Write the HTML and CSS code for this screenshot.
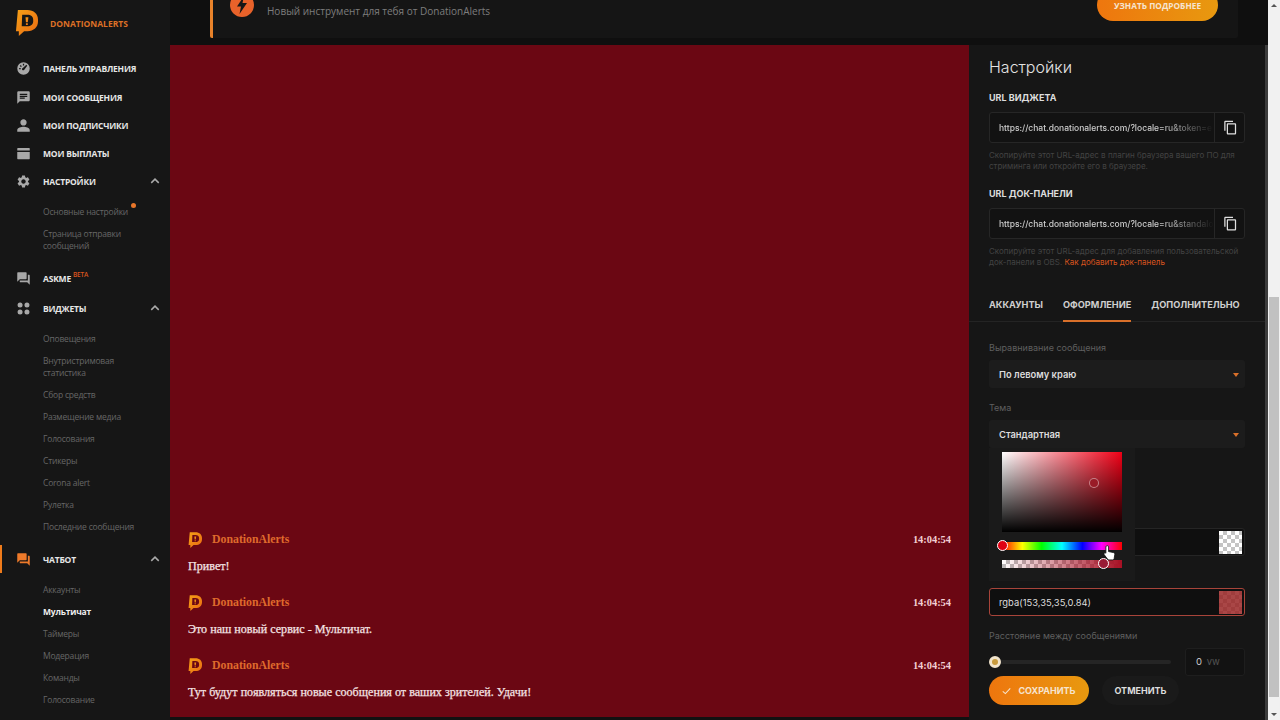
FILE: index.html
```html
<!DOCTYPE html>
<html lang="ru">
<head>
    <meta charset="UTF-8">
    <title>DonationAlerts - Мультичат</title>
    <link rel="stylesheet" href="styles.css">
</head>
<body>
    <svg class="sprite" width="0" height="0">
        <defs>
            <linearGradient id="logoFill" x1="0" y1="0" x2="1" y2="1">
                <stop offset="0" stop-color="#f5a017"/>
                <stop offset="1" stop-color="#ea6a12"/>
            </linearGradient>
            <symbol id="logo" viewBox="0 0 24 27">
                <path fill="url(#logoFill)" fill-rule="evenodd" d="M3 0H13C19.5 0 24 4 24 10V12C24 18 19.5 22 13 22H9.5L4 27V22H1ZM7.5 5L7 17H13C16.5 17 19 15 19 12V10C19 7 16.5 5 13 5Z"/>
                <path fill="url(#logoFill)" d="M11 7.5H14L13.4 12.8H11.4ZM11.4 13.8H13.4V15.6H11.4Z"/>
            </symbol>
            <symbol id="i-forum" viewBox="0 0 24 24"><path d="M21 6h-2v9H6v2c0 .55.45 1 1 1h11l4 4V7c0-.55-.45-1-1-1zm-4 6V3c0-.55-.45-1-1-1H3c-.55 0-1 .45-1 1v14l4-4h10c.55 0 1-.45 1-1z"/></symbol>
            <symbol id="i-copy" viewBox="0 0 24 24"><path d="M16 1H4c-1.1 0-2 .9-2 2v14h2V3h12V1zm3 4H8c-1.1 0-2 .9-2 2v14c0 1.1.9 2 2 2h11c1.1 0 2-.9 2-2V7c0-1.1-.9-2-2-2zm0 16H8V7h11v14z"/></symbol>
            <symbol id="i-chevron" viewBox="0 0 12 8"><path d="M1 6.5L6 1.5L11 6.5" fill="none" stroke="currentColor" stroke-width="2"/></symbol>
        </defs>
    </svg>

    <!-- Левое меню -->
    <aside class="sidebar">
        <div class="brand">
            <svg class="brand-logo"><use href="#logo"/></svg>
            <span class="brand-name">DONATIONALERTS</span>
        </div>
        <nav class="nav">
            <a class="nav-item nav-item-first">
                <svg class="nav-icon" viewBox="0 0 24 24"><path fill-rule="evenodd" d="M12 2a10 10 0 1 0 0 20a10 10 0 0 0 0-20zM5 11h2.5v2H5zM7.5 6.5l1.8 1.8-1.4 1.4-1.8-1.8zM11 4.5h2V7h-2zM16.5 6l1.5 1.5-4.5 6a2 2 0 1 1-2.5-2.5z"/></svg>
                <span>ПАНЕЛЬ УПРАВЛЕНИЯ</span>
            </a>
            <a class="nav-item">
                <svg class="nav-icon" viewBox="0 0 24 24"><path d="M20 2H4c-1.1 0-2 .9-2 2v18l4-4h14c1.1 0 2-.9 2-2V4c0-1.1-.9-2-2-2zM6 9h12v2H6V9zm8 5H6v-2h8v2zm4-6H6V6h12v2z"/></svg>
                <span>МОИ СООБЩЕНИЯ</span>
            </a>
            <a class="nav-item">
                <svg class="nav-icon" viewBox="0 0 24 24"><path d="M12 12c2.9 0 5-2.1 5-5s-2.1-5-5-5-5 2.1-5 5 2.1 5 5 5zm0 2c-3.3 0-10 1.7-10 5v3h20v-3c0-3.3-6.7-5-10-5z"/></svg>
                <span>МОИ ПОДПИСЧИКИ</span>
            </a>
            <a class="nav-item">
                <svg class="nav-icon" viewBox="0 0 24 24"><path d="M3 3H21C21.6 3 22 3.4 22 4V7H2V4C2 3.4 2.4 3 3 3ZM2 9.5H22V20C22 20.6 21.6 21 21 21H3C2.4 21 2 20.6 2 20Z"/></svg>
                <span>МОИ ВЫПЛАТЫ</span>
            </a>
            <a class="nav-item">
                <svg class="nav-icon" viewBox="0 0 24 24"><path d="M19.14 12.94c.04-.3.06-.61.06-.94 0-.32-.02-.64-.07-.94l2.03-1.58c.18-.14.23-.41.12-.61l-1.92-3.32c-.12-.22-.37-.29-.59-.22l-2.39.96c-.5-.38-1.03-.7-1.62-.94l-.36-2.54c-.04-.24-.24-.41-.48-.41h-3.84c-.24 0-.43.17-.47.41l-.36 2.54c-.59.24-1.13.57-1.62.94l-2.39-.96c-.22-.08-.47 0-.59.22L2.74 8.87c-.12.21-.08.47.12.61l2.03 1.58c-.05.3-.09.63-.09.94s.02.64.07.94l-2.03 1.58c-.18.14-.23.41-.12.61l1.92 3.32c.12.22.37.29.59.22l2.39-.96c.5.38 1.03.7 1.62.94l.36 2.54c.05.24.24.41.48.41h3.84c.24 0 .44-.17.47-.41l.36-2.54c.59-.24 1.13-.56 1.62-.94l2.39.96c.22.08.47 0 .59-.22l1.92-3.32c.12-.22.07-.47-.12-.61l-2.01-1.58zM12 15.6c-1.98 0-3.6-1.62-3.6-3.6s1.62-3.6 3.6-3.6 3.6 1.62 3.6 3.6-1.62 3.6-3.6 3.6z"/></svg>
                <span>НАСТРОЙКИ</span>
                <svg class="nav-chevron"><use href="#i-chevron"/></svg>
            </a>
            <ul class="sub-list">
                <li><span class="has-dot">Основные настройки</span></li>
                <li>Страница отправки сообщений</li>
            </ul>
            <a class="nav-item">
                <svg class="nav-icon"><use href="#i-forum"/></svg>
                <span>ASKME</span><sup class="beta">BETA</sup>
            </a>
            <a class="nav-item nav-item-gap">
                <svg class="nav-icon" viewBox="0 0 24 24"><circle cx="6.5" cy="6.5" r="4"/><circle cx="17.5" cy="6.5" r="4"/><circle cx="6.5" cy="17.5" r="4"/><circle cx="17.5" cy="17.5" r="4"/></svg>
                <span>ВИДЖЕТЫ</span>
                <svg class="nav-chevron"><use href="#i-chevron"/></svg>
            </a>
            <ul class="sub-list">
                <li>Оповещения</li>
                <li>Внутристримовая статистика</li>
                <li>Сбор средств</li>
                <li>Размещение медиа</li>
                <li>Голосования</li>
                <li>Стикеры</li>
                <li>Corona alert</li>
                <li>Рулетка</li>
                <li>Последние сообщения</li>
            </ul>
            <a class="nav-item nav-item-active">
                <svg class="nav-icon"><use href="#i-forum"/></svg>
                <span>ЧАТБОТ</span>
                <svg class="nav-chevron"><use href="#i-chevron"/></svg>
            </a>
            <ul class="sub-list">
                <li>Аккаунты</li>
                <li class="sub-active">Мультичат</li>
                <li>Таймеры</li>
                <li>Модерация</li>
                <li>Команды</li>
                <li>Голосование</li>
            </ul>
        </nav>
    </aside>

    <div class="main">
        <!-- Баннер -->
        <div class="banner">
            <div class="banner-card">
                <svg class="banner-icon" viewBox="0 0 24 24">
                    <circle cx="12" cy="12" r="12" fill="#e8622a"/>
                    <path d="M14 3L7 13.5H11L9.5 21L17 10H12.5Z" fill="#161616"/>
                </svg>
                <span class="banner-text">Новый инструмент для тебя от DonationAlerts</span>
                <a class="banner-button">УЗНАТЬ ПОДРОБНЕЕ</a>
            </div>
        </div>

        <div class="content">
            <!-- Превью чата -->
            <section class="chat">
                <div class="message">
                    <div class="message-head">
                        <svg class="message-logo"><use href="#logo"/></svg>
                        <span class="message-name">DonationAlerts</span>
                        <span class="message-time">14:04:54</span>
                    </div>
                    <p class="message-text">Привет!</p>
                </div>
                <div class="message">
                    <div class="message-head">
                        <svg class="message-logo"><use href="#logo"/></svg>
                        <span class="message-name">DonationAlerts</span>
                        <span class="message-time">14:04:54</span>
                    </div>
                    <p class="message-text">Это наш новый сервис - Мультичат.</p>
                </div>
                <div class="message">
                    <div class="message-head">
                        <svg class="message-logo"><use href="#logo"/></svg>
                        <span class="message-name">DonationAlerts</span>
                        <span class="message-time">14:04:54</span>
                    </div>
                    <p class="message-text">Тут будут появляться новые сообщения от ваших зрителей. Удачи!</p>
                </div>
            </section>

            <!-- Настройки -->
            <section class="panel">
                <h2 class="panel-title">Настройки</h2>

                <div class="url-label">URL ВИДЖЕТА</div>
                <div class="url-box">
                    <span class="url-value">https://chat.donationalerts.com/?locale=ru&amp;token=e</span>
                    <span class="url-copy"><svg class="copy-icon"><use href="#i-copy"/></svg></span>
                </div>
                <p class="hint">Скопируйте этот URL-адрес в плагин браузера вашего ПО для стриминга или откройте его в браузере.</p>

                <div class="url-label url-label-next">URL ДОК-ПАНЕЛИ</div>
                <div class="url-box">
                    <span class="url-value">https://chat.donationalerts.com/?locale=ru&amp;standalo</span>
                    <span class="url-copy"><svg class="copy-icon"><use href="#i-copy"/></svg></span>
                </div>
                <p class="hint">Скопируйте этот URL-адрес для добавления пользовательской док-панели в OBS. <a class="hint-link">Как добавить док-панель</a></p>

                <div class="tabs">
                    <span class="tab">АККАУНТЫ</span>
                    <span class="tab tab-active">ОФОРМЛЕНИЕ</span>
                    <span class="tab">ДОПОЛНИТЕЛЬНО</span>
                </div>

                <label class="field-label field-label-first">Выравнивание сообщения</label>
                <div class="select">По левому краю<i class="select-arrow"></i></div>

                <label class="field-label">Тема</label>
                <div class="select">Стандартная<i class="select-arrow"></i></div>

                <label class="field-label field-label-far">Цвет текста</label>
                <div class="color-field">
                    <span class="color-value">rgba(255,255,255,0)</span>
                    <span class="swatch"></span>
                </div>

                <label class="field-label">Цвет фона</label>
                <div class="color-field color-field-focus">
                    <span class="color-value">rgba(153,35,35,0.84)</span>
                    <span class="swatch swatch-red"></span>
                </div>

                <label class="field-label">Расстояние между сообщениями</label>
                <div class="range-row">
                    <div class="range-track"><span class="range-thumb"></span></div>
                    <div class="range-box">0 <span class="range-unit">vw</span></div>
                </div>

                <div class="actions">
                    <a class="btn-save">
                        <svg class="btn-check" viewBox="0 0 12 10"><path d="M1 5.5L4.5 8.5L11 1.5" fill="none" stroke="currentColor" stroke-width="1.4"/></svg>
                        СОХРАНИТЬ
                    </a>
                    <a class="btn-cancel">ОТМЕНИТЬ</a>
                </div>

                <!-- Открытый выбор цвета -->
                <div class="picker">
                    <div class="picker-area"><span class="picker-handle"></span></div>
                    <div class="picker-hue"><span class="hue-thumb"></span></div>
                    <div class="picker-alpha"><span class="alpha-thumb"></span></div>
                    <svg class="cursor" viewBox="0 0 14 18">
                        <path d="M4.5 1.5C5.3 1.5 6 2.2 6 3V8L11 9C12.3 9.3 12.8 10 12.7 11.2L12 15.5C11.8 16.4 11.3 17 10.3 17H6.5C5.8 17 5.3 16.7 4.9 16.2L1.4 11.5C.8 10.7 1 9.9 1.7 9.5C2.3 9.2 2.8 9.4 3.1 9.8V3C3.1 2.2 3.7 1.5 4.5 1.5Z" fill="#fff" stroke="#111" stroke-width=".9"/>
                    </svg>
                </div>
            </section>
        </div>
    </div>

    <!-- Полоса прокрутки страницы -->
    <div class="page-scroll">
        <i class="scroll-up"></i>
        <span class="scroll-thumb"></span>
        <i class="scroll-down"></i>
    </div>
</body>
</html>
```

FILE: styles.css
```css
* {
    box-sizing: border-box;
}
html, body {
    height: 100%;
}
body {
    display: flex;
    margin: 0;
    overflow: hidden;
    background-color: #111;
    color: #fff;
    font-family: "Inter", "Liberation Sans", sans-serif;
}
.sprite {
    position: absolute;
}
a {
    text-decoration: none;
}

/* Левое меню */
.sidebar {
    flex: 0 0 170px;
    height: 720px;
    overflow: hidden;
    background-color: #161616;
    font-family: "Open Sans", "Noto Sans", sans-serif;
}
.brand {
    display: flex;
    align-items: center;
    height: 46px;
    padding-left: 15px;
}
.brand-logo {
    width: 23px;
    height: 26px;
    margin-top: -1px;
}
.brand-name {
    margin-left: 12px;
    font-size: 8.5px;
    font-weight: 700;
    color: #dd7026;
}
.nav {
    padding-top: 8px;
}
.nav-item {
    position: relative;
    display: flex;
    align-items: center;
    height: 28px;
    padding-left: 16px;
    font-size: 8.5px;
    font-weight: 700;
    letter-spacing: -0.2px;
    color: #e6e6e6;
}
.nav-item-first {
    margin-bottom: 1px;
}
.nav-item-gap {
    margin-top: 2px;
}
.nav-icon {
    flex: none;
    width: 15px;
    height: 15px;
    margin-right: 12px;
    fill: #a8a8a8;
}
.nav-chevron {
    position: absolute;
    top: 11px;
    right: 10px;
    width: 10px;
    height: 6px;
    color: #aaa;
}
.nav-item-active::before {
    content: "";
    position: absolute;
    top: 0;
    left: 0;
    width: 2px;
    height: 28px;
    background-color: #ef7b1b;
}
.nav-item-active .nav-icon {
    fill: #ee7a2a;
}
.beta {
    margin: -8px 0 0 2px;
    font-size: 6.5px;
    font-weight: 600;
    color: #d9541e;
}
.sub-list {
    margin: 0;
    padding: 6px 20px 7px 43px;
    list-style: none;
    font-size: 8.5px;
    line-height: 12px;
    letter-spacing: -0.2px;
    color: #666;
}
.sub-list li {
    padding: 5px 0;
}
.sub-active {
    font-weight: 700;
    color: #eee;
}
.has-dot {
    position: relative;
}
.has-dot::after {
    content: "";
    position: absolute;
    top: -3px;
    right: -8px;
    width: 5px;
    height: 5px;
    border-radius: 50%;
    background-color: #e8762a;
}

/* Баннер */
.main {
    flex: 1;
    display: flex;
    flex-direction: column;
    min-width: 0;
    height: 720px;
}
.banner {
    flex: 0 0 45px;
    padding: 0 30px 0 40px;
    background-color: #0f0f0f;
}
.banner-card {
    display: flex;
    align-items: flex-start;
    height: 58px;
    margin-top: -20px;
    padding: 0 20px 0 17px;
    border-left: 3px solid #e8822a;
    border-radius: 2px;
    background-color: #151515;
}
.banner-icon {
    flex: none;
    width: 24px;
    height: 24px;
    margin-top: 13px;
}
.banner-text {
    margin: 23px 0 0 13px;
    font-family: "Open Sans", "Noto Sans", sans-serif;
    font-size: 10px;
    line-height: 16px;
    color: #7d7d7d;
}
.banner-button {
    display: flex;
    align-items: center;
    justify-content: center;
    width: 121px;
    height: 32px;
    margin: 9px 0 0 auto;
    border-radius: 16px;
    background: linear-gradient(90deg, #ee760e, #e8990f);
    font-family: "Open Sans", "Noto Sans", sans-serif;
    font-size: 8.3px;
    font-weight: 700;
    color: #f6e4cf;
}

.content {
    flex: 1;
    display: flex;
    min-height: 0;
}

/* Чат */
.chat {
    flex: 0 0 799px;
    display: flex;
    flex-direction: column;
    justify-content: flex-end;
    height: 672px;
    padding: 0 18px 17px;
    background-color: #6b0713;
    font-family: "Liberation Serif", serif;
}
.message-head {
    display: flex;
    align-items: center;
    height: 16px;
}
.message-logo {
    width: 14px;
    height: 16px;
}
.message-name {
    margin-left: 10px;
    font-size: 11.8px;
    font-weight: 700;
    color: #df6a2c;
}
.message-time {
    margin-left: auto;
    font-size: 10.4px;
    font-weight: 700;
    color: #f2cfd3;
}
.message-text {
    margin: 10.5px 0 20.5px;
    font-size: 12.1px;
    line-height: 16px;
    color: #f4e3e3;
    -webkit-text-stroke: 0.25px #f4e3e3;
}
.message:last-child .message-text {
    margin-bottom: 0;
}

/* Настройки */
.panel {
    position: relative;
    flex: 1;
    min-width: 0;
    padding: 0 20px;
    overflow: hidden;
    border-right: 3px solid #3c3c3c;
    background-color: #161616;
}
.panel-title {
    margin: 11px 0 0;
    font-size: 16px;
    font-weight: 300;
    line-height: 22px;
    color: #e4e4e4;
}
.url-label {
    margin-top: 14px;
    font-size: 9px;
    font-weight: 700;
    line-height: 12px;
    color: #ddd;
}
.url-label-next {
    margin-top: 16px;
}
.url-box {
    display: flex;
    height: 31px;
    margin-top: 8px;
    border: 1px solid #262626;
    border-radius: 3px;
    background-color: #121212;
}
.url-value {
    flex: 1;
    min-width: 0;
    padding-left: 9px;
    overflow: hidden;
    font-size: 8.5px;
    font-weight: 500;
    line-height: 30px;
    white-space: nowrap;
    color: #ccc;
    -webkit-mask-image: linear-gradient(90deg, #000 75%, transparent 100%);
    mask-image: linear-gradient(90deg, #000 75%, transparent 100%);
}
.url-copy {
    flex: 0 0 30px;
    display: flex;
    align-items: center;
    justify-content: center;
    padding-left: 1px;
    border-left: 1px solid #262626;
}
.copy-icon {
    width: 15px;
    height: 15px;
    fill: #e0e0e0;
}
.hint {
    margin: 7px 0 0;
    font-size: 8px;
    line-height: 11px;
    color: #434343;
}
.hint-link {
    color: #d9541e;
}
.tabs {
    display: flex;
    gap: 20px;
    height: 35px;
    margin: 19px -20px 0;
    padding: 0 20px;
    border-bottom: 1px solid #242424;
}
.tab {
    height: 35px;
    font-size: 9.2px;
    font-weight: 700;
    line-height: 35px;
    white-space: nowrap;
    color: #cfcfcf;
}
.tab-active {
    border-bottom: 2px solid #d9702a;
}
.field-label {
    display: block;
    margin-top: 13px;
    font-size: 9px;
    line-height: 14px;
    color: #5f5f5f;
}
.field-label-first {
    margin-top: 19px;
}
.field-label-far {
    margin-top: 61px;
}
.select {
    position: relative;
    height: 28px;
    margin-top: 5px;
    padding-left: 10px;
    border-radius: 3px;
    background-color: #1c1c1c;
    font-size: 9.4px;
    font-weight: 600;
    line-height: 29px;
    color: #ddd;
}
.select-arrow {
    position: absolute;
    top: 13px;
    right: 6px;
    border-top: 4px solid #d9702a;
    border-right: 3px solid transparent;
    border-left: 3px solid transparent;
}
.color-field {
    display: flex;
    align-items: center;
    justify-content: space-between;
    height: 28px;
    margin-top: 5px;
    padding: 0 2px 0 9px;
    border: 1px solid #252525;
    border-radius: 3px;
    background-color: #0f0f0f;
    font-size: 9.4px;
    color: #ddd;
}
.color-field-focus {
    border-color: #a8443a;
}
.swatch {
    width: 23px;
    height: 23px;
    background: repeating-conic-gradient(#c4c4c4 0 25%, #fff 0 50%) 0 0 / 8px 8px;
}
.swatch-red {
    background:
        linear-gradient(rgba(153, 35, 35, 0.84), rgba(153, 35, 35, 0.84)),
        repeating-conic-gradient(#c4c4c4 0 25%, #fff 0 50%) 0 0 / 8px 8px;
}
.range-row {
    display: flex;
    align-items: center;
    height: 28px;
    margin-top: 5px;
}
.range-track {
    position: relative;
    flex: 0 0 182px;
    height: 4px;
    border-radius: 2px;
    background-color: #252525;
}
.range-thumb {
    position: absolute;
    top: -4px;
    left: 0;
    width: 12px;
    height: 12px;
    border: 3px solid #f1e4cc;
    border-radius: 50%;
    background-color: #c89a3c;
}
.range-box {
    width: 60px;
    height: 28px;
    margin-left: 14px;
    padding-left: 10px;
    border: 1px solid #1e1e1e;
    border-radius: 3px;
    background-color: #121212;
    font-size: 9.5px;
    line-height: 26px;
    color: #ccc;
}
.range-unit {
    margin-left: 2px;
    color: #555;
}
.actions {
    display: flex;
    gap: 13px;
}
.btn-save,
.btn-cancel {
    display: flex;
    align-items: center;
    justify-content: center;
    height: 29px;
    border-radius: 15px;
    font-size: 9px;
    font-weight: 700;
}
.btn-save {
    width: 100px;
    background: linear-gradient(90deg, #ee760e, #e8990f);
    color: #f6e4cf;
}
.btn-check {
    width: 9px;
    height: 8px;
    margin-right: 7px;
}
.btn-cancel {
    width: 77px;
    background-color: #1a1a1a;
    color: #ddd;
}

/* Выбор цвета */
.picker {
    position: absolute;
    top: 403px;
    left: 20px;
    width: 146px;
    height: 133px;
    background-color: #1a1a1a;
}
.picker-area {
    position: absolute;
    top: 4px;
    left: 13px;
    width: 120px;
    height: 80px;
    background:
        linear-gradient(0deg, #000, transparent),
        linear-gradient(90deg, #fff, rgba(255, 255, 255, 0)),
        #f00016;
}
.picker-handle {
    position: absolute;
    top: 26px;
    left: 87px;
    width: 10px;
    height: 10px;
    border: 1px solid rgba(255, 255, 255, 0.45);
    border-radius: 50%;
    background-color: #991b27;
}
.picker-hue {
    position: absolute;
    top: 94px;
    left: 13px;
    width: 120px;
    height: 8px;
    background: linear-gradient(90deg, #f00, #ff0 17%, #0f0 33%, #0ff 50%, #00f 67%, #f0f 83%, #f00);
}
.hue-thumb {
    position: absolute;
    top: -2px;
    left: -5px;
    width: 11px;
    height: 11px;
    border: 1px solid #fff;
    border-radius: 50%;
    background-color: #e00012;
}
.picker-alpha {
    position: absolute;
    top: 112px;
    left: 13px;
    width: 120px;
    height: 8px;
    background:
        linear-gradient(90deg, rgba(170, 16, 36, 0), #a81024),
        repeating-conic-gradient(#bbb 0 25%, #fff 0 50%) 0 0 / 8px 8px;
}
.alpha-thumb {
    position: absolute;
    top: -2px;
    left: 96px;
    width: 11px;
    height: 11px;
    border: 1px solid #fff;
    border-radius: 50%;
    background-color: #991b35;
}
.cursor {
    position: absolute;
    top: 96px;
    left: 114px;
    width: 13px;
    height: 17px;
}

/* Полоса прокрутки страницы */
.page-scroll {
    position: relative;
    flex: 0 0 12px;
    height: 720px;
    background-color: #f1f1f1;
}
.scroll-thumb {
    position: absolute;
    top: 297px;
    left: 1px;
    width: 10px;
    height: 400px;
    background-color: #c1c1c1;
}
.scroll-up,
.scroll-down {
    position: absolute;
    left: 3px;
    border-right: 3px solid transparent;
    border-left: 3px solid transparent;
}
.scroll-up {
    top: 4px;
    border-bottom: 3px solid #555;
}
.scroll-down {
    bottom: 4px;
    border-top: 3px solid #555;
}
```
